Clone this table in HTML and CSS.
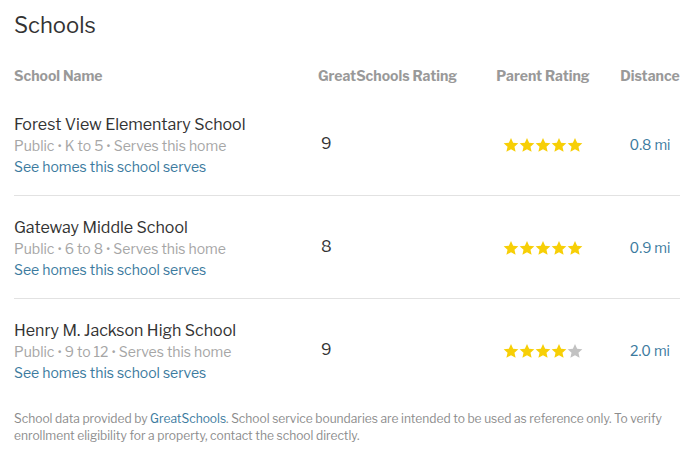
FILE: index.html
```html
<!DOCTYPE html>
<html>
<head>
<meta charset="utf-8">
<link rel="stylesheet" href="styles.css">
</head>
<body>
<svg width="0" height="0" class="defs">
  <defs>
    <symbol id="star" viewBox="0 0 24 24">
      <path d="M12 1.5l3.2 7.1 7.8.8-5.8 5.2 1.7 7.7L12 18.4l-6.9 3.9 1.7-7.7L1 9.4l7.8-.8z"/>
    </symbol>
  </defs>
</svg>
<section class="schools">
  <h2 class="title">Schools</h2>
  <div class="grid head">
    <div>School Name</div>
    <div>GreatSchools Rating</div>
    <div class="c">Parent Rating</div>
    <div class="c dist">Distance</div>
  </div>

  <div class="grid row">
    <div class="info">
      <div class="name">Forest View Elementary School</div>
      <div class="meta">Public • K to 5 • Serves this home</div>
      <a class="link" href="#">See homes this school serves</a>
    </div>
    <div class="rating">9</div>
    <div class="c stars">
      <svg class="on"><use href="#star"/></svg><svg class="on"><use href="#star"/></svg><svg class="on"><use href="#star"/></svg><svg class="on"><use href="#star"/></svg><svg class="on"><use href="#star"/></svg>
    </div>
    <div class="c dist link">0.8 mi</div>
  </div>

  <div class="grid row">
    <div class="info">
      <div class="name">Gateway Middle School</div>
      <div class="meta">Public • 6 to 8 • Serves this home</div>
      <a class="link" href="#">See homes this school serves</a>
    </div>
    <div class="rating">8</div>
    <div class="c stars">
      <svg class="on"><use href="#star"/></svg><svg class="on"><use href="#star"/></svg><svg class="on"><use href="#star"/></svg><svg class="on"><use href="#star"/></svg><svg class="on"><use href="#star"/></svg>
    </div>
    <div class="c dist link">0.9 mi</div>
  </div>

  <div class="grid row last">
    <div class="info">
      <div class="name">Henry M. Jackson High School</div>
      <div class="meta">Public • 9 to 12 • Serves this home</div>
      <a class="link" href="#">See homes this school serves</a>
    </div>
    <div class="rating">9</div>
    <div class="c stars">
      <svg class="on"><use href="#star"/></svg><svg class="on"><use href="#star"/></svg><svg class="on"><use href="#star"/></svg><svg class="on"><use href="#star"/></svg><svg class="off"><use href="#star"/></svg>
    </div>
    <div class="c dist link">2.0 mi</div>
  </div>

  <p class="foot">School data provided by <a class="link" href="#">GreatSchools</a>. School service boundaries are intended to be used as reference only. To verify enrollment eligibility for a property, contact the school directly.</p>
</section>
</body>
</html>
```

FILE: styles.css
```css
html, body {
  margin: 0;
  padding: 0;
  background: #fff;
}
body {
  font-family: "Libre Franklin", Lato, "Noto Sans", sans-serif;
  color: #333;
}
.defs {
  position: absolute;
  width: 0;
  height: 0;
}
.schools {
  padding: 0 18px 0 14px;
}
.title {
  margin: 0;
  padding-top: 10px;
  font-size: 22px;
  line-height: 30px;
  font-weight: 400;
  color: #333;
}
.grid {
  display: grid;
  grid-template-columns: 304px 172px 106px 94px;
  align-items: center;
}
.head {
  margin-top: 18px;
  height: 35px;
  font-size: 14px;
  font-weight: 700;
  color: #999;
}
.c {
  text-align: center;
}
.dist {
  padding-left: 14px;
}
.row {
  padding: 21px 0 18px;
  border-bottom: 1px solid #e2e2e2;
}
.row.last {
  border-bottom: none;
}
.row .rating {
  margin-bottom: 4px;
}
.row .stars,
.row .dist {
  margin-bottom: 2px;
}
.info {
  display: flex;
  flex-direction: column;
}
.name {
  font-size: 16px;
  line-height: 21px;
  color: #333;
}
.meta {
  font-size: 14px;
  line-height: 21px;
  color: #a6a6a6;
}
.link {
  color: #3b7a9e;
  text-decoration: none;
  font-size: 14px;
  line-height: 21px;
}
.rating {
  font-size: 16px;
  padding-left: 3px;
}
.stars {
  display: flex;
  justify-content: center;
  gap: 0;
}
.stars svg {
  width: 16px;
  height: 16px;
}
.stars .on {
  fill: #f7cf06;
}
.stars .off {
  fill: #c2c2c2;
}
.foot {
  margin: 9px 0 0;
  font-size: 12px;
  line-height: 17px;
  color: #8c8c8c;
}
.foot .link {
  font-size: inherit;
  line-height: inherit;
}
```
